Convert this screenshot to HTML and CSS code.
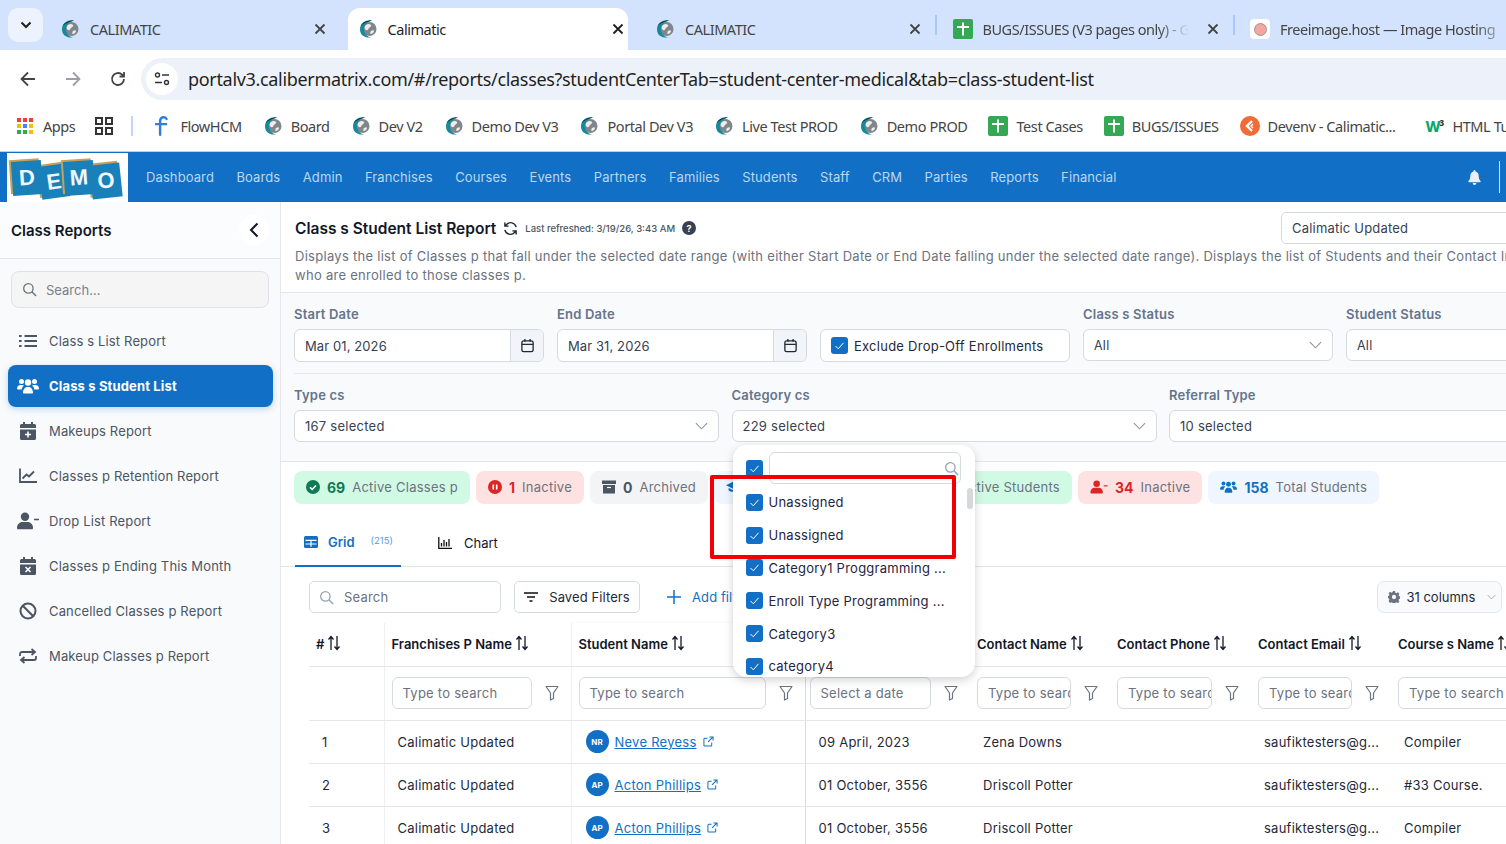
FILE: index.html
```html
<!DOCTYPE html>
<html lang="en">
<head>
<meta charset="utf-8">
<title>Class s Student List Report</title>
<link rel="stylesheet" href="styles.css">
</head>
<body>
<svg class="sprite" aria-hidden="true">
  <symbol id="cal" viewBox="0 0 20 20"><circle cx="11.5" cy="10" r="7" fill="#7f878c"/><path d="M8 6c2-1.500 4-1 5 0s-1 2-2 3-1 3-3 2-2-4 0-5z" fill="#f3e9e6"/><path d="M13 12c1.500-1 3-1 3 0s-2 3-3 3-1-2 0-3z" fill="#eee"/><path d="M14 1.500C8 .5 2 4 2 10.500S8 19 13 18.500c-4-1-7-4-7-8s3-7.500 8-9z" fill="#17899c"/><path d="M14 1.500C9 1 4 3.500 2.800 7c2-2.500 6-4.500 11.200-5.500z" fill="#12333c"/></symbol>
  <symbol id="sheet" viewBox="0 0 20 20"><rect width="20" height="20" rx="2" fill="#34a853"/><path d="M4 8h12M10 3.500v13" stroke="#fff" stroke-width="2" fill="none"/></symbol>
  <symbol id="check" viewBox="0 0 17 17"><rect width="17" height="17" rx="3" fill="#1170c5"/><path d="M4.500 9l2.800 2.800 5.200-6" stroke="#fff" stroke-width="1" fill="none"/></symbol>
  <symbol id="funnel" viewBox="0 0 14 16"><path d="M1 1.500h12L8.500 8v5.500l-3 1.500V8z" fill="none" stroke="#6b7280" stroke-width="1.200" stroke-linejoin="round"/></symbol>
  <symbol id="sort" viewBox="0 0 14 16"><path d="M4 15V2M1.500 4.500L4 1.500l2.500 3M10 1v13M7.500 11.500l2.500 3 2.500-3" fill="none" stroke="#111827" stroke-width="1.300"/></symbol>
  <symbol id="calendar" viewBox="0 0 16 16"><rect x="2" y="3" width="12" height="11.500" rx="2" fill="none" stroke="#1f2937" stroke-width="1.400"/><path d="M2 6.800h12M5.200 1v3M10.800 1v3" stroke="#1f2937" stroke-width="1.400" fill="none"/></symbol>
  <symbol id="chev" viewBox="0 0 14 8"><path d="M1 1l6 6 6-6" fill="none" stroke="#8a94a6" stroke-width="1.200"/></symbol>
  <symbol id="users" viewBox="0 0 22 18"><circle cx="4.500" cy="4.500" r="2.500"/><circle cx="17.500" cy="4.500" r="2.500"/><circle cx="11" cy="5.500" r="3.200"/><path d="M0 12c0-2.500 1.500-4 3.500-4h2c.5 0 1 .2 1.300.4C5.500 9.500 4.700 11 4.700 12.500H1c-.6 0-1-.2-1-.5zM22 12c0-2.500-1.500-4-3.500-4h-2c-.5 0-1 .2-1.300.4 1.300 1.100 2.100 2.600 2.100 4.100H21c.6 0 1-.2 1-.5zM6 15.500C6 12.500 8 10 10 10h2c2 0 4 2.500 4 5.500 0 .6-.4 1-1 1H7c-.6 0-1-.4-1-1z"/></symbol>
  <symbol id="userminus" viewBox="0 0 22 18"><circle cx="8" cy="4.800" r="4.200"/><path d="M0 16c0-3.500 2.500-6 5.500-6h5c3 0 5.500 2.500 5.500 6 0 .8-.5 1.300-1.200 1.300H1.200C.5 17.300 0 16.800 0 16z"/><path d="M17 7.500h5" stroke="currentColor" stroke-width="1.500"/></symbol>
  <symbol id="ext" viewBox="0 0 12 12"><path d="M9.500 7v3a1 1 0 01-1 1H2a1 1 0 01-1-1V3.500a1 1 0 011-1h3M7 1h4v4M11 1L5.500 6.500" fill="none" stroke="#1170c5" stroke-width="1.100"/></symbol>
  <symbol id="close" viewBox="0 0 12 12"><path d="M1.500 1.500l9 9M10.500 1.500l-9 9" stroke="currentColor" stroke-width="1.800" fill="none"/></symbol>
  <symbol id="search" viewBox="0 0 16 16"><circle cx="6.800" cy="6.800" r="5" fill="none" stroke="currentColor" stroke-width="1.400"/><path d="M10.500 10.500l4.500 4.500" stroke="currentColor" stroke-width="1.600" fill="none"/></symbol>
</svg>

<header class="browser">
  <div class="tabstrip">
    <div class="tabmenu"><svg class="tabmenu-icon" viewBox="0 0 12 8"><path d="M1.500 1.500L6 6l4.500-4.500" fill="none" stroke="#1f1f1f" stroke-width="2"/></svg></div>
    <div class="tab"><svg class="ic20"><use href="#cal"/></svg><span class="tab-title">CALIMATIC</span><svg class="tab-x"><use href="#close"/></svg></div>
    <div class="tab tab-active"><svg class="ic20"><use href="#cal"/></svg><span class="tab-title">Calimatic</span><svg class="tab-x"><use href="#close"/></svg></div>
    <div class="tab"><svg class="ic20"><use href="#cal"/></svg><span class="tab-title">CALIMATIC</span><svg class="tab-x"><use href="#close"/></svg><i class="tab-sep"></i></div>
    <div class="tab"><svg class="ic20"><use href="#sheet"/></svg><span class="tab-title tab-fade">BUGS/ISSUES (V3 pages only) - Go</span><svg class="tab-x"><use href="#close"/></svg><i class="tab-sep"></i></div>
    <div class="tab"><span class="freeimg"><i></i></span><span class="tab-title tab-fade">Freeimage.host — Image Hosting</span></div>
  </div>
  <div class="toolbar">
    <svg class="nav-ic" viewBox="0 0 18 18"><path d="M16 9H3M9 2.500L2.500 9 9 15.500" fill="none" stroke="#444" stroke-width="1.800"/></svg>
    <svg class="nav-ic nav-dim" viewBox="0 0 18 18"><path d="M2 9h13M9 2.500L15.500 9 9 15.500" fill="none" stroke="#9aa0a6" stroke-width="1.800"/></svg>
    <svg class="nav-ic" viewBox="0 0 18 18"><path d="M15 9a6 6 0 11-1.800-4.300L15 6.500M15 2v4.500h-4.500" fill="none" stroke="#444" stroke-width="1.800"/></svg>
    <div class="omnibox">
      <span class="site-btn"><svg viewBox="0 0 16 14" class="site-ic"><circle cx="3.500" cy="3" r="2" fill="none" stroke="#333" stroke-width="1.400"/><path d="M8 3h7M1 10.500h7" stroke="#333" stroke-width="1.500"/><circle cx="12.500" cy="10.500" r="2" fill="none" stroke="#333" stroke-width="1.400"/></svg></span>
      <span class="url">portalv3.calibermatrix.com/#/reports/classes?studentCenterTab=student-center-medical&amp;tab=class-student-list</span>
    </div>
  </div>
  <div class="bookmarks">
    <svg class="apps-ic" viewBox="0 0 16 16"><g fill="#ea4335"><rect width="4" height="4"/><rect x="6" width="4" height="4"/><rect x="12" width="4" height="4"/></g><g fill="#fbbc04"><rect y="6" width="4" height="4"/><rect x="6" y="6" width="4" height="4" fill="#4285f4"/><rect x="12" y="6" width="4" height="4"/></g><g fill="#34a853"><rect y="12" width="4" height="4"/><rect x="6" y="12" width="4" height="4"/><rect x="12" y="12" width="4" height="4" fill="#fbbc04"/></g></svg>
    <span class="bm-apps">Apps</span>
    <svg class="grid-ic" viewBox="0 0 18 18"><g fill="none" stroke="#333" stroke-width="2"><rect x="1" y="1" width="6" height="6"/><rect x="11" y="1" width="6" height="6"/><rect x="1" y="11" width="6" height="6"/><rect x="11" y="11" width="6" height="6"/></g></svg>
    <i class="bm-sep"></i>
    <span class="bm bm-first"><svg class="ic-f" viewBox="0 0 14 22"><path d="M12.500 4C11 1.500 6 1 5.500 6v15M1 9.500h11" fill="none" stroke="#2f7de1" stroke-width="2.600" stroke-linecap="round"/></svg>FlowHCM</span>
    <span class="bm"><svg class="ic20"><use href="#cal"/></svg>Board</span>
    <span class="bm"><svg class="ic20"><use href="#cal"/></svg>Dev V2</span>
    <span class="bm"><svg class="ic20"><use href="#cal"/></svg>Demo Dev V3</span>
    <span class="bm"><svg class="ic20"><use href="#cal"/></svg>Portal Dev V3</span>
    <span class="bm"><svg class="ic20"><use href="#cal"/></svg>Live Test PROD</span>
    <span class="bm"><svg class="ic20"><use href="#cal"/></svg>Demo PROD</span>
    <span class="bm"><svg class="ic20"><use href="#sheet"/></svg>Test Cases</span>
    <span class="bm"><svg class="ic20"><use href="#sheet"/></svg>BUGS/ISSUES</span>
    <span class="bm bm-wide"><svg class="ic20" viewBox="0 0 20 20"><circle cx="10" cy="10" r="10" fill="#f26a35"/><path d="M12 5l-5 5 5 5" fill="none" stroke="#fff" stroke-width="2.400"/><path d="M13 8l-2 2 2 2" fill="none" stroke="#fff" stroke-width="1.400"/></svg>Devenv - Calimatic...</span>
    <span class="bm"><span class="w3">W<sup>3</sup></span>HTML Tutorial</span>
  </div>
</header>

<nav class="appnav">
  <div class="logo">
    <span class="tile tile-d">D</span><span class="tile tile-e">E</span><span class="tile tile-m">M</span><span class="tile tile-o">O</span>
  </div>
  <ul class="navlinks">
    <li>Dashboard</li><li>Boards</li><li>Admin</li><li>Franchises</li><li>Courses</li><li>Events</li><li>Partners</li><li>Families</li><li>Students</li><li>Staff</li><li class="nl-wide">CRM</li><li class="nl-wide">Parties</li><li>Reports</li><li>Financial</li>
  </ul>
  <svg class="bell" viewBox="0 0 14 16"><path d="M7 0c.6 0 1 .4 1 1v.6C10 2 11.500 3.700 11.500 6c0 3 .8 4.500 2 5.700.4.500.1 1.300-.6 1.300H1.100c-.7 0-1-.8-.6-1.300 1.200-1.200 2-2.700 2-5.700 0-2.300 1.500-4 3.500-4.400V1c0-.6.4-1 1-1zM5 14h4a2 2 0 01-4 0z" fill="#e8f0fa"/></svg>
  <i class="nav-div"></i>
</nav>

<div class="main">
  <aside class="sidebar">
    <div class="side-head">
      <h2>Class Reports</h2>
      <span class="collapse"><svg viewBox="0 0 10 16" class="collapse-ic"><path d="M8.500 1.500L2 8l6.500 6.500" fill="none" stroke="#111827" stroke-width="2"/></svg></span>
    </div>
    <div class="side-search"><svg class="side-search-ic"><use href="#search"/></svg><span>Search...</span></div>
    <ul class="side-list">
      <li><svg class="si" viewBox="0 0 18 14"><path d="M5.500 2H18M5.500 7H18M5.500 12H18" stroke="#4b5563" stroke-width="1.800"/><path d="M0 1h2.600v2H0zM0 6h2.600v2H0zM0 11h2.600v2H0z" fill="#4b5563"/></svg>Class s List Report</li>
      <li class="active"><svg class="si si-white"><use href="#users"/></svg>Class s Student List</li>
      <li><svg class="si" viewBox="0 0 18 18"><path d="M4 0h2v2h6V0h2v2h1.500A1.500 1.500 0 0117 3.500V6H1V3.500A1.500 1.500 0 012.500 2H4zM1 7.500h16v9a1.500 1.500 0 01-1.500 1.500h-13A1.500 1.500 0 011 16.500z" fill="#4b5563"/><path d="M9 9.500v6M6 12.500h6" stroke="#fff" stroke-width="1.600"/></svg>Makeups Report</li>
      <li><svg class="si" viewBox="0 0 18 15"><path d="M1 0v13.500h17" fill="none" stroke="#4b5563" stroke-width="1.800"/><path d="M3.500 10l4-4 2.500 2 5-5" fill="none" stroke="#4b5563" stroke-width="1.800"/></svg>Classes p Retention Report</li>
      <li><svg class="si si-grey"><use href="#userminus"/></svg>Drop List Report</li>
      <li><svg class="si" viewBox="0 0 18 18"><path d="M4 0h2v2h6V0h2v2h1.500A1.500 1.500 0 0117 3.500V6H1V3.500A1.500 1.500 0 012.500 2H4zM1 7.500h16v9a1.500 1.500 0 01-1.500 1.500h-13A1.500 1.500 0 011 16.500z" fill="#4b5563"/><path d="M6.500 10l5 5M11.500 10l-5 5" stroke="#fff" stroke-width="1.600"/></svg>Classes p Ending This Month</li>
      <li><svg class="si" viewBox="0 0 18 18"><circle cx="9" cy="9" r="7.500" fill="none" stroke="#4b5563" stroke-width="2"/><path d="M3.800 3.800l10.400 10.400" stroke="#4b5563" stroke-width="2"/></svg>Cancelled Classes p Report</li>
      <li><svg class="si" viewBox="0 0 18 16"><path d="M1 8V6a2 2 0 012-2h12M12.500 1L16 4l-3.500 3M17 8v2a2 2 0 01-2 2H3M5.500 9L2 12l3.500 3" fill="none" stroke="#4b5563" stroke-width="1.800"/></svg>Makeup Classes p Report</li>
    </ul>
  </aside>

  <section class="content">
    <div class="report-head">
      <div class="title-row">
        <h1>Class s Student List Report</h1>
        <svg class="refresh" viewBox="0 0 16 16"><path d="M14 6.500A6 6 0 003.500 4L2 5.500M2 1.500v4h4M2 9.500A6 6 0 0012.500 12l1.500-1.500M14 14.500v-4h-4" fill="none" stroke="#1f2937" stroke-width="1.500"/></svg>
        <span class="refreshed">Last refreshed: 3/19/26, 3:43 AM</span>
        <span class="help">?</span>
        <div class="org-select"><span>Calimatic Updated</span><svg class="chev"><use href="#chev"/></svg></div>
      </div>
      <p class="desc">Displays the list of Classes p that fall under the selected date range (with either Start Date or End Date falling under the selected date range). Displays the list of Students and their Contact Information who are enrolled to those classes p.</p>
    </div>

    <div class="filters">
      <div class="grid5">
        <div class="field"><label>Start Date</label><div class="date-input"><span>Mar 01, 2026</span><b><svg class="cal-ic"><use href="#calendar"/></svg></b></div></div>
        <div class="field"><label>End Date</label><div class="date-input"><span>Mar 31, 2026</span><b><svg class="cal-ic"><use href="#calendar"/></svg></b></div></div>
        <div class="field field-end"><div class="exclude"><svg class="cb"><use href="#check"/></svg><span>Exclude Drop-Off Enrollments</span></div></div>
        <div class="field"><label>Class s Status</label><div class="select select-sm"><span>All</span><svg class="chev"><use href="#chev"/></svg></div></div>
        <div class="field"><label>Student Status</label><div class="select select-sm"><span>All</span><svg class="chev"><use href="#chev"/></svg></div></div>
      </div>
      <div class="grid3">
        <div class="field"><label>Type cs</label><div class="select"><span>167 selected</span><svg class="chev"><use href="#chev"/></svg></div></div>
        <div class="field field-drop"><label>Category cs</label><div class="select"><span>229 selected</span><svg class="chev"><use href="#chev"/></svg></div>
          <div class="dropdown">
            <div class="dd-top"><svg class="cb"><use href="#check"/></svg><div class="dd-search"><svg class="dd-search-ic"><use href="#search"/></svg></div></div>
            <ul class="dd-list">
              <li><svg class="cb"><use href="#check"/></svg>Unassigned</li>
              <li><svg class="cb"><use href="#check"/></svg>Unassigned</li>
              <li><svg class="cb"><use href="#check"/></svg>Category1 Proggramming ...</li>
              <li><svg class="cb"><use href="#check"/></svg>Enroll Type Programming ...</li>
              <li><svg class="cb"><use href="#check"/></svg>Category3</li>
              <li><svg class="cb"><use href="#check"/></svg>category4</li>
            </ul>
            <i class="dd-scroll"></i>
            <div class="highlight"></div>
          </div>
        </div>
        <div class="field"><label>Referral Type</label><div class="select"><span>10 selected</span><svg class="chev"><use href="#chev"/></svg></div></div>
      </div>
    </div>

    <div class="chips">
      <div class="chip chip-green"><svg class="chip-ic" viewBox="0 0 14 14"><circle cx="7" cy="7" r="7" fill="#0f7a55"/><path d="M4 7.200l2.200 2.200L10 5.500" fill="none" stroke="#fff" stroke-width="1.500"/></svg><b>69</b><span>Active Classes p</span></div>
      <div class="chip chip-red"><svg class="chip-ic" viewBox="0 0 14 14"><circle cx="7" cy="7" r="7" fill="#dc2626"/><path d="M5.300 4.500v5M8.700 4.500v5" stroke="#fff" stroke-width="1.600"/></svg><b>1</b><span>Inactive</span></div>
      <div class="chip chip-grey"><svg class="chip-ic" viewBox="0 0 14 13"><path d="M0 0h14v3.500H0zM1 4.500h12V13H1z" fill="#4b5563"/><path d="M5 7h4" stroke="#fff" stroke-width="1.200"/></svg><b>0</b><span>Archived</span></div>
      <div class="chip chip-blue chip-hidden"><svg class="chip-ic chip-cap" viewBox="0 0 16 14"><path d="M8 1L0 5l8 4 6-3v5h1.500V5zM3 8v3c2 2 8 2 10 0V8l-5 2.500z" fill="#1170c5"/></svg><b>215</b><span>Total Classes</span></div>
      <div class="chip chip-green chip-students"><b>124</b><span>Active Students</span></div>
      <div class="chip chip-red"><svg class="chip-ic chip-user"><use href="#userminus"/></svg><b>34</b><span>Inactive</span></div>
      <div class="chip chip-blue"><svg class="chip-ic chip-users"><use href="#users"/></svg><b>158</b><span>Total Students</span></div>
    </div>

    <div class="viewtabs">
      <div class="vt vt-on"><svg class="vt-ic" viewBox="0 0 14 12"><rect width="14" height="12" rx="1.500" fill="#1170c5"/><path d="M1.500 4.300h11M1.500 8h11M7 4.300v6.500" stroke="#fff" stroke-width="1.200"/></svg><b>Grid</b><small>(215)</small></div>
      <div class="vt"><svg class="vt-ic" viewBox="0 0 14 12"><path d="M.8 0v11.300H14" fill="none" stroke="#111" stroke-width="1.300"/><path d="M3.500 6v3.500M6 3v6.500M8.500 5v4.500M11 2v7.500" stroke="#111" stroke-width="1.300"/></svg><span>Chart</span></div>
    </div>

    <div class="gridbar">
      <div class="gsearch"><svg class="gsearch-ic"><use href="#search"/></svg><span>Search</span></div>
      <div class="saved"><svg class="saved-ic" viewBox="0 0 14 10"><path d="M0 1h14M3 5h8M5.500 9h3" stroke="#111" stroke-width="1.400"/></svg><span>Saved Filters</span></div>
      <div class="addf"><svg class="addf-ic" viewBox="0 0 14 14"><path d="M7 0v14M0 7h14" stroke="#1170c5" stroke-width="1.500"/></svg><span>Add filter</span></div>
      <div class="cols"><svg class="cols-ic" viewBox="0 0 14 14"><path d="M7 4.500A2.500 2.500 0 107 9.500 2.500 2.500 0 007 4.500zM5.800 0h2.400l.4 1.900 1.300.6 1.700-1 1.700 1.700-1 1.700.6 1.300 1.900.4v2.400l-1.900.4-.6 1.300 1 1.700-1.700 1.700-1.700-1-1.300.6-.4 1.900H5.800l-.4-1.900-1.300-.6-1.700 1L.7 11.800l1-1.700-.6-1.300L-.8 8.400V6l1.900-.4.6-1.300-1-1.700L2.400.9l1.700 1 1.300-.6z" fill="#6b7280" fill-rule="evenodd"/></svg><span>31 columns</span><svg class="cols-chev"><use href="#chev"/></svg></div>
    </div>

    <table class="data">
      <colgroup><col class="c1"><col class="c2"><col class="c3"><col class="c4"><col class="c5"><col class="c6"><col class="c7"><col class="c8"></colgroup>
      <thead>
        <tr class="hdr">
          <th class="edge">#<svg class="sort"><use href="#sort"/></svg></th>
          <th class="edge">Franchises P Name<svg class="sort"><use href="#sort"/></svg></th>
          <th class="edge-strong">Student Name<svg class="sort"><use href="#sort"/></svg></th>
          <th>Enrollment Date<svg class="sort"><use href="#sort"/></svg></th>
          <th>Contact Name<svg class="sort"><use href="#sort"/></svg></th>
          <th>Contact Phone<svg class="sort"><use href="#sort"/></svg></th>
          <th>Contact Email<svg class="sort"><use href="#sort"/></svg></th>
          <th>Course s Name<svg class="sort"><use href="#sort"/></svg></th>
        </tr>
        <tr class="flt">
          <td class="edge"></td>
          <td class="edge"><div class="fc"><span class="fi">Type to search</span><svg class="fn"><use href="#funnel"/></svg></div></td>
          <td class="edge-strong"><div class="fc"><span class="fi">Type to search</span><svg class="fn"><use href="#funnel"/></svg></div></td>
          <td><div class="fc fc-date"><span class="fi">Select a date</span><svg class="fn"><use href="#funnel"/></svg></div></td>
          <td><div class="fc"><span class="fi">Type to search</span><svg class="fn"><use href="#funnel"/></svg></div></td>
          <td><div class="fc"><span class="fi">Type to search</span><svg class="fn"><use href="#funnel"/></svg></div></td>
          <td><div class="fc"><span class="fi">Type to search</span><svg class="fn"><use href="#funnel"/></svg></div></td>
          <td><div class="fc"><span class="fi">Type to search</span><svg class="fn"><use href="#funnel"/></svg></div></td>
        </tr>
      </thead>
      <tbody>
        <tr><td class="edge">1</td><td class="edge">Calimatic Updated</td><td class="edge-strong"><div class="who"><span class="av">NR</span><a>Neve Reyess</a><svg class="ext"><use href="#ext"/></svg></div></td><td>09 April, 2023</td><td>Zena Downs</td><td></td><td>saufiktesters@g...</td><td>Compiler</td></tr>
        <tr><td class="edge">2</td><td class="edge">Calimatic Updated</td><td class="edge-strong"><div class="who"><span class="av">AP</span><a>Acton Phillips</a><svg class="ext"><use href="#ext"/></svg></div></td><td>01 October, 3556</td><td>Driscoll Potter</td><td></td><td>saufiktesters@g...</td><td>#33 Course.</td></tr>
        <tr><td class="edge">3</td><td class="edge">Calimatic Updated</td><td class="edge-strong"><div class="who"><span class="av">AP</span><a>Acton Phillips</a><svg class="ext"><use href="#ext"/></svg></div></td><td>01 October, 3556</td><td>Driscoll Potter</td><td></td><td>saufiktesters@g...</td><td>Compiler</td></tr>
        <tr><td class="edge"></td><td class="edge"></td><td class="edge-strong"><div class="who"><span class="av"></span></div></td><td></td><td></td><td></td><td></td><td></td></tr>
      </tbody>
    </table>
  </section>
</div>
</body>
</html>
```

FILE: styles.css
```css
* { box-sizing: border-box; }
html, body { margin: 0; height: 844px; overflow: hidden; }
body { background: #fff; font-family: Inter, "Liberation Sans", sans-serif; font-size: 13px; color: #1f2937; }
ul { list-style: none; margin: 0; padding: 0; }
h1, h2, p { margin: 0; }
.sprite { display: none; }
.ic20 { width: 20px; height: 20px; flex: none; }

.browser { font-family: "Noto Sans", sans-serif; color: #3c4043; }
.tabstrip { height: 50px; background: #d3e3fd; display: flex; align-items: flex-end; padding-left: 8px; gap: 17.5px; overflow: hidden; }
.tabmenu { width: 35px; height: 34px; margin: 0 -10.5px 8px 0; background: #ecf2fe; border-radius: 10px; display: flex; align-items: center; justify-content: center; flex: none; }
.tabmenu-icon { width: 12px; height: 8px; }
.tab { position: relative; width: 280px; height: 42px; flex: none; display: flex; align-items: center; padding: 0 10px; gap: 10px; border-radius: 12px 12px 0 0; font-size: 14.5px; letter-spacing: -.45px; color: #444; }
.tab-active { background: #fff; color: #1f1f1f; }
.tab-title { flex: 1; white-space: nowrap; overflow: hidden; }
.tab-fade { -webkit-mask-image: linear-gradient(to right, #000 85%, transparent); mask-image: linear-gradient(to right, #000 85%, transparent); }
.tab-x { width: 12px; height: 12px; flex: none; margin: 0 -6px 0 8px; color: #444; }
.tab-active .tab-x { color: #1f1f1f; }
.tab-sep { position: absolute; right: -12px; top: 7px; width: 2px; height: 20px; background: #a8c7fa; }
.freeimg { width: 20px; height: 20px; background: #fff; border-radius: 4px; flex: none; display: flex; align-items: center; justify-content: center; }
.freeimg i { width: 13px; height: 13px; border-radius: 50%; border: 1px solid #999; background: #f4a7a0; }

.toolbar { height: 50px; display: flex; align-items: center; padding: 8px 0 0 19px; }
.nav-ic { width: 18px; height: 18px; flex: none; margin-right: 27px; }
.omnibox { flex: 1; height: 42px; margin-left: -13px; background: #edf2fa; border-radius: 21px 0 0 21px; display: flex; align-items: center; padding-left: 5px; }
.site-btn { width: 32px; height: 32px; border-radius: 50%; background: #fff; display: flex; align-items: center; justify-content: center; }
.site-ic { width: 16px; height: 14px; }
.url { margin-left: 10px; font-size: 18px; letter-spacing: -.32px; color: #1f1f1f; white-space: nowrap; }

.bookmarks { height: 52px; border-bottom: 1px solid #c9ccd1; display: flex; align-items: center; padding-left: 17px; font-size: 14.5px; letter-spacing: -.42px; color: #444; white-space: nowrap; overflow: hidden; }
.apps-ic { width: 16px; height: 16px; flex: none; }
.bm-apps { margin-left: 10px; }
.grid-ic { width: 18px; height: 18px; flex: none; margin-left: 20px; }
.bm-sep { width: 2px; height: 20px; background: #c2d7f5; margin: 0 16px 0 18px; flex: none; }
.bm { display: flex; align-items: center; gap: 8px; margin-right: 21px; flex: none; }
.bm-first { gap: 12px; margin-left: 6px; }
.ic-f { width: 13px; height: 21px; }
.bm-wide { margin-right: 30px; }
.w3 { width: 19px; color: #04aa6d; font-weight: 800; font-size: 15px; letter-spacing: -1px; }
.w3 sup { font-size: 8px; color: #333; vertical-align: 6px; line-height: 0; }

.appnav { height: 50px; background: #1170c5; display: flex; align-items: center; padding-left: 7px; position: relative; }
.logo { width: 121px; height: 49px; background: #fff; display: flex; align-items: center; padding: 2px 0 0 5px; flex: none; }
.tile { display: flex; align-items: center; justify-content: center; height: 34px; color: #f1f6f9; font: 700 22px "Liberation Sans", sans-serif; background: #1a80ba; flex: none; box-shadow: -2px -2px 0 #c6a257; }
.tile-d { width: 30px; transform: rotate(-4deg); z-index: 2; }
.tile-e { width: 28px; margin-left: -2px; transform: translateY(3px) rotate(-8deg); height: 33px; }
.tile-m { width: 30px; margin-left: -4px; transform: rotate(-4deg); z-index: 2; }
.tile-o { width: 30px; margin-left: -3px; transform: translateY(3px) rotate(-6deg); }
.navlinks { display: flex; gap: 22.5px; margin-left: 18px; font-size: 13px; letter-spacing: .1px; color: #bcd7f0; white-space: nowrap; }
.nl-wide { margin-right: 0; }
.bell { width: 13px; height: 15px; margin-left: auto; margin-right: 18px; }
.nav-div { width: 1px; height: 32px; background: #d7e6f6; margin-right: 6px; }

.main { height: 642px; display: flex; }
.sidebar { width: 281px; flex: none; background: #f8fafc; border-right: 1px solid #e5e7eb; }
.side-head { height: 57px; border-bottom: 1px solid #e2e5ea; display: flex; align-items: center; justify-content: space-between; padding: 0 11px; background: #fbfcfd; }
.side-head h2 { font-size: 15px; font-weight: 600; color: #111827; }
.collapse { width: 30px; height: 30px; border-radius: 50%; background: #fff; display: flex; align-items: center; justify-content: center; }
.collapse-ic { width: 10px; height: 16px; }
.side-search { margin: 12px 11px 0; height: 37px; border: 1px solid #dfe1e4; border-radius: 8px; background: #f5f5f5; display: flex; align-items: center; gap: 9px; padding: 0 10px; color: #7b8088; font-size: 13px; }
.side-search-ic { width: 15px; height: 15px; color: #6b7280; }
.side-list { margin-top: 12px; padding: 0 7px 0 8px; }
.side-list li { height: 42px; margin-bottom: 3px; display: flex; align-items: center; padding-left: 11px; gap: 12px; font-size: 13px; letter-spacing: .15px; color: #4b5563; white-space: nowrap; border-radius: 8px; }
.side-list .active { background: #1170c5; color: #fff; font-weight: 700; box-shadow: 0 2px 6px rgba(17,112,197,.25); }
.si { width: 18px; height: 18px; flex: none; }
.si-white { width: 22px; fill: #fff; margin: 0 -2px; }
.si-grey { width: 22px; fill: #4b5563; color: #4b5563; margin: 0 -2px; }

.content { width: 1300px; flex: none; position: relative; }
.report-head { height: 91px; padding: 10px 0 0 14px; border-bottom: 1px solid #e2e5ea; }
.title-row { display: flex; align-items: center; height: 32px; }
.title-row h1 { font-size: 15.500px; font-weight: 600; color: #111827; white-space: nowrap; }
.refresh { width: 15px; height: 15px; margin-left: 7px; }
.refreshed { margin-left: 7px; font-size: 9.500px; font-weight: 500; color: #4b5563; }
.help { width: 14px; height: 14px; margin-left: 7px; border-radius: 50%; background: #374151; color: #fff; font-size: 9px; font-weight: 700; display: flex; align-items: center; justify-content: center; }
.org-select { width: 260px; height: 32px; margin-left: auto; margin-right: 40px; flex: none; border: 1px solid #d5d9e0; border-radius: 5px; display: flex; align-items: center; justify-content: space-between; padding: 0 8px 0 10px; font-size: 13px; letter-spacing: .2px; color: #374151; }
.org-select .chev { position: relative; }
.chev { width: 13px; height: 8px; flex: none; }
.desc { margin-top: 3px; width: 1290px; font-size: 13px; line-height: 19px; letter-spacing: .28px; color: #6b7280; }

.filters { height: 169px; background: #f8fafc; border-bottom: 1px solid #e2e5ea; padding: 13px 0 0 13px; }
.grid5 { display: grid; grid-template-columns: repeat(5, 250px); gap: 13px; height: 68px; border-bottom: 1px solid #e2e8f0; }
.grid3 { display: grid; grid-template-columns: repeat(3, 425px); gap: 12.500px; margin-top: 13px; }
.field { position: relative; display: flex; flex-direction: column; }
.field label { height: 23px; font-size: 13px; font-weight: 600; color: #64748b; letter-spacing: .2px; line-height: 16px; }
.field-end { justify-content: flex-start; padding-top: 23px; }
.date-input { height: 33px; background: #fff; border: 1px solid #d5dae3; border-radius: 6px; display: flex; align-items: center; justify-content: space-between; padding-left: 10px; color: #374151; letter-spacing: .1px; }
.date-input b { width: 33px; height: 100%; display: flex; align-items: center; justify-content: center; background: #f1f5f9; border-left: 1px solid #d5dae3; border-radius: 0 6px 6px 0; }
.cal-ic { width: 15px; height: 15px; }
.exclude { height: 33px; background: #fff; border: 1px solid #d5dae3; border-radius: 6px; display: flex; align-items: center; gap: 6px; padding-left: 10px; letter-spacing: .25px; color: #1f2937; white-space: nowrap; }
.cb { width: 17px; height: 17px; flex: none; }
.select { height: 32px; background: #fff; border: 1px solid #d5dae3; border-radius: 6px; display: flex; align-items: center; justify-content: space-between; padding: 0 10px; letter-spacing: .25px; color: #374151; }
.select-sm { font-size: 12.500px; }

.dropdown { position: absolute; z-index: 5; left: 1px; top: 58px; width: 242px; height: 232px; background: #fff; border-radius: 14px; box-shadow: 0 3px 10px rgba(0,0,0,.18); }
.dd-top { height: 41px; position: relative; overflow: hidden; padding: 15px 0 0 13px; }
.dd-search { position: absolute; left: 36px; top: 7px; width: 192px; height: 32px; border: 1px solid #d5dae3; border-radius: 6px; background: #fff; }
.dd-search-ic { position: absolute; right: 1px; top: 8px; width: 15px; height: 15px; color: #94a3b8; }
.dd-list { height: 190px; overflow: hidden; padding: 0 0 0 13px; }
.dd-list li { height: 32.800px; display: flex; align-items: center; gap: 6px; font-size: 13px; letter-spacing: .25px; color: #1f2540; white-space: nowrap; }
.dd-scroll { position: absolute; right: 2px; top: 43px; width: 6px; height: 21px; border-radius: 3px; background: #d6d8db; }
.highlight { position: absolute; left: -23px; top: 30px; width: 246px; height: 84px; border: 4px solid #f00005; border-radius: 2px; pointer-events: none; }

.chips { height: 57px; display: flex; gap: 6px; padding: 8.500px 0 0 13px; align-items: flex-start; }
.chip { height: 33px; border-radius: 8px; display: flex; align-items: center; padding: 0 12px; gap: 7px; font-size: 13px; letter-spacing: .25px; color: #6b7280; white-space: nowrap; flex: none; }
.chip b { font-size: 14px; font-weight: 700; letter-spacing: 0; }
.chip-ic { width: 14px; height: 14px; flex: none; }
.chip-green { background: #d1fae5; }
.chip-green b { color: #0f7a55; }
.chip-red { background: #fee2e2; }
.chip-red b { color: #dc2626; }
.chip-grey { background: #f3f4f6; }
.chip-grey b { color: #4b5563; }
.chip-blue { background: #eff6ff; }
.chip-blue b { color: #1170c5; }
.chip-hidden { width: 187px; }
.chip-students { width: 165px; justify-content: flex-end; }
.chip-user { width: 18px; fill: #dc2626; color: #dc2626; }
.chip-users { width: 17px; fill: #1170c5; }
.viewtabs { height: 48px; display: flex; border-bottom: 1px solid #e2e5ea; }
.vt { position: relative; height: 48px; display: flex; align-items: center; gap: 10px; padding: 0 9px; font-size: 13px; color: #111827; }
.vt:first-child { margin-left: 14px; width: 106px; border-bottom: 2.500px solid #1170c5; }
.vt b { color: #1170c5; font-weight: 600; }
.vt small { font-size: 9.500px; color: #5b9bd5; margin: -4px 0 0 6px; }
.vt-on { padding-bottom: 0; }
.vt:last-child { margin-left: 28px; gap: 12px; }
.vt-ic { width: 14px; height: 12px; flex: none; }

.gridbar { display: flex; align-items: center; height: 56px; padding: 4px 0 0 28px; position: relative; }
.gsearch { width: 192px; height: 32px; border: 1px solid #d5dae3; border-radius: 5px; display: flex; align-items: center; padding-left: 9px; gap: 10px; color: #6b7280; letter-spacing: .2px; }
.gsearch-ic { width: 15px; height: 15px; color: #94a3b8; }
.saved { margin-left: 13px; width: 126px; height: 32px; border: 1px solid #d5dae3; border-radius: 5px; display: flex; align-items: center; justify-content: center; gap: 11px; color: #1f2937; letter-spacing: .1px; }
.saved-ic { width: 14px; height: 10px; }
.addf { margin-left: 27px; display: flex; align-items: center; gap: 11px; color: #1170c5; letter-spacing: .1px; white-space: nowrap; }
.addf-ic { width: 14px; height: 14px; }
.cols { margin-left: 628px; width: 125px; height: 32px; background: #f8fafc; border: 1px solid #e2e8f0; border-radius: 7px; display: flex; align-items: center; padding-left: 10px; gap: 6px; color: #1f2937; white-space: nowrap; }
.cols-ic { width: 12px; height: 12px; }
.cols-chev { width: 9px; height: 6px; margin-left: 6px; }

.data { margin-left: 28px; width: 1322px; table-layout: fixed; border-collapse: collapse; font-size: 13px; letter-spacing: .25px; }
.c1 { width: 75px; } .c2 { width: 187px; } .c3 { width: 234px; } .c4 { width: 165px; } .c5 { width: 140px; } .c6 { width: 141px; } .c7 { width: 140px; } .c8 { width: 240px; }
.data th { height: 43px; padding: 0 0 2px 7px; text-align: left; font-size: 13px; font-weight: 600; letter-spacing: 0; color: #111827; white-space: nowrap; border-bottom: 1px solid #e5e7eb; }
.data td { height: 43px; padding: 0 0 0 13px; color: #1f2937; border-bottom: 1px solid #e5e7eb; white-space: nowrap; overflow: hidden; }
.data .flt td { height: 54px; padding: 0 0 0 7px; }
.edge { border-right: 1px solid #eef0f3; }
.edge-strong { border-right: 1px solid #d8dbe0; box-shadow: 2px 0 3px rgba(0,0,0,.05); }
.sort { width: 14px; height: 16px; margin-left: 3px; vertical-align: -2px; }
.fc { display: flex; align-items: center; }
.fi { flex: 1; min-width: 0; height: 32px; border: 1px solid #d5dae3; border-radius: 6px; line-height: 30px; padding-left: 10px; overflow: hidden; white-space: nowrap; color: #6b7280; background: #fff; }
.fn { width: 14px; height: 16px; flex: none; margin: 0 12px 0 13px; }
.fc-date { margin-left: -3px; }
.who { display: flex; align-items: center; }
.av { width: 23px; height: 23px; border-radius: 50%; background: #1170c5; color: #fff; font-size: 8px; font-weight: 700; letter-spacing: 0; display: flex; align-items: center; justify-content: center; flex: none; margin-left: 1px; }
.who a { margin-left: 6px; color: #1170c5; text-decoration: underline; }
.ext { width: 11px; height: 11px; margin-left: 6px; flex: none; }
```
